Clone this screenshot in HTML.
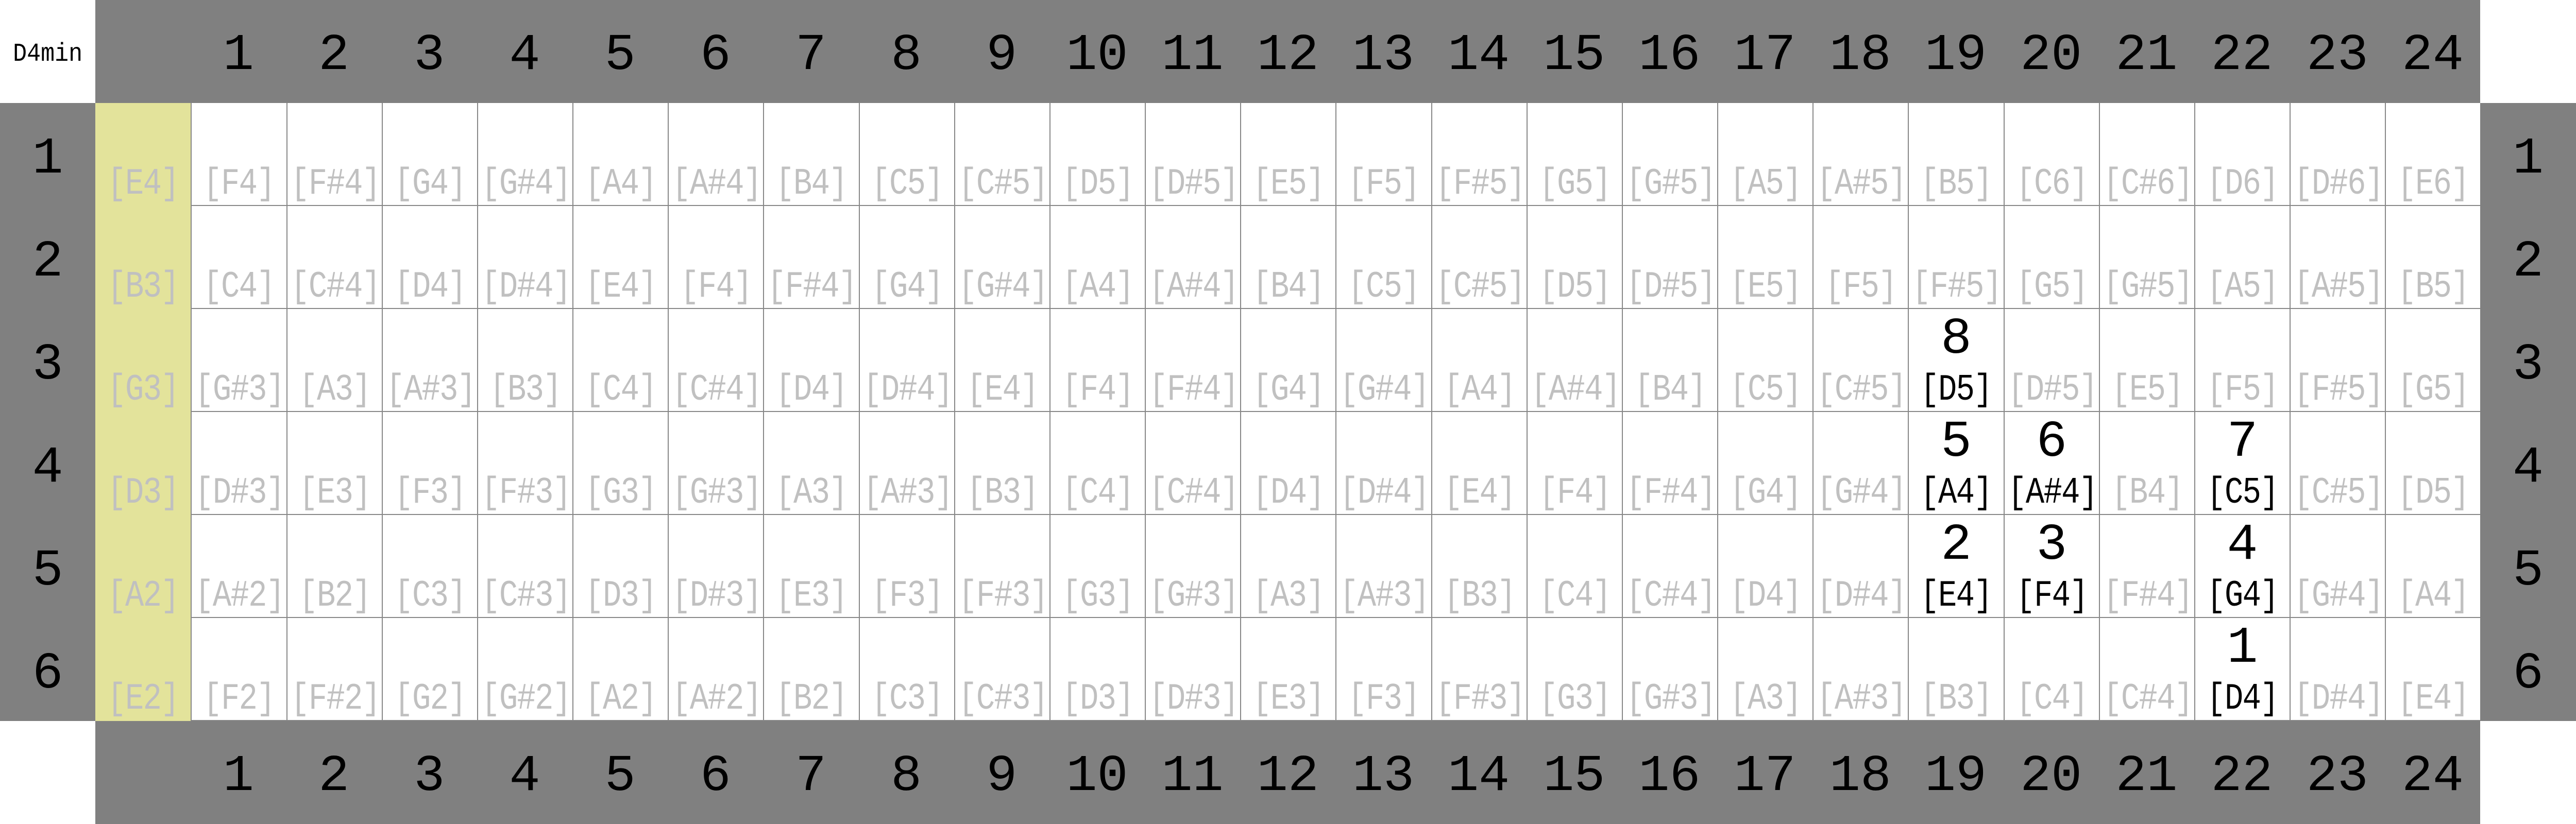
<!DOCTYPE html>
<html><head><meta charset="utf-8"><style>
html,body{margin:0;padding:0;background:#fff;width:100vw;height:100vh;overflow:hidden;}
#b{position:absolute;left:0;top:0;width:100vw;height:100vh;overflow:hidden;font-family:"Liberation Mono","DejaVu Sans Mono",monospace;}
.row{display:flex;width:100vw;height:12.5vh;}
.row>div{position:relative;box-sizing:border-box;width:calc(100vw / 27);height:12.5vh;flex:0 0 calc(100vw / 27);overflow:hidden;}
.g{background:#808080;}
.w{background:#fff;}
.y{background:#e3e39b;}
.f{background:#fff;border-left:2px solid #888;border-bottom:2px solid #888;}
.n{position:absolute;left:0;right:0;top:3.6875vh;text-align:center;font-size:6.25vh;line-height:1;color:#000;}
.g.r .n{top:3.75vh;}
.t{position:absolute;left:-10px;right:-10px;top:7.5625vh;text-align:center;font-size:4.5vh;line-height:1;color:#c0c0c0;transform:scaleX(0.84);white-space:nowrap;letter-spacing:-2px;}
.k{color:#000;}
.h{position:absolute;left:0;right:0;top:0.625vh;text-align:center;font-size:6.25vh;line-height:1;color:#000;}
.lbl{position:absolute;left:-10px;right:-10px;top:5.0625vh;text-align:center;font-size:3.125vh;line-height:1;color:#000;transform:scaleX(0.9);}
</style></head><body><div id="b">
<div class="row">
<div class="w"><span class="lbl">D4min</span></div><div class="g"></div>
<div class="g"><span class="n">1</span></div><div class="g"><span class="n">2</span></div><div class="g"><span class="n">3</span></div><div class="g"><span class="n">4</span></div><div class="g"><span class="n">5</span></div><div class="g"><span class="n">6</span></div><div class="g"><span class="n">7</span></div><div class="g"><span class="n">8</span></div><div class="g"><span class="n">9</span></div><div class="g"><span class="n">10</span></div><div class="g"><span class="n">11</span></div><div class="g"><span class="n">12</span></div><div class="g"><span class="n">13</span></div><div class="g"><span class="n">14</span></div><div class="g"><span class="n">15</span></div><div class="g"><span class="n">16</span></div><div class="g"><span class="n">17</span></div><div class="g"><span class="n">18</span></div><div class="g"><span class="n">19</span></div><div class="g"><span class="n">20</span></div><div class="g"><span class="n">21</span></div><div class="g"><span class="n">22</span></div><div class="g"><span class="n">23</span></div><div class="g"><span class="n">24</span></div>
<div class="w"></div>
</div>
<div class="row">
<div class="g r"><span class="n">1</span></div><div class="y"><span class="t">[E4]</span></div>
<div class="f"><span class="t">[F4]</span></div><div class="f"><span class="t">[F#4]</span></div><div class="f"><span class="t">[G4]</span></div><div class="f"><span class="t">[G#4]</span></div><div class="f"><span class="t">[A4]</span></div><div class="f"><span class="t">[A#4]</span></div><div class="f"><span class="t">[B4]</span></div><div class="f"><span class="t">[C5]</span></div><div class="f"><span class="t">[C#5]</span></div><div class="f"><span class="t">[D5]</span></div><div class="f"><span class="t">[D#5]</span></div><div class="f"><span class="t">[E5]</span></div><div class="f"><span class="t">[F5]</span></div><div class="f"><span class="t">[F#5]</span></div><div class="f"><span class="t">[G5]</span></div><div class="f"><span class="t">[G#5]</span></div><div class="f"><span class="t">[A5]</span></div><div class="f"><span class="t">[A#5]</span></div><div class="f"><span class="t">[B5]</span></div><div class="f"><span class="t">[C6]</span></div><div class="f"><span class="t">[C#6]</span></div><div class="f"><span class="t">[D6]</span></div><div class="f"><span class="t">[D#6]</span></div><div class="f"><span class="t">[E6]</span></div>
<div class="g r"><span class="n">1</span></div>
</div>
<div class="row">
<div class="g r"><span class="n">2</span></div><div class="y"><span class="t">[B3]</span></div>
<div class="f"><span class="t">[C4]</span></div><div class="f"><span class="t">[C#4]</span></div><div class="f"><span class="t">[D4]</span></div><div class="f"><span class="t">[D#4]</span></div><div class="f"><span class="t">[E4]</span></div><div class="f"><span class="t">[F4]</span></div><div class="f"><span class="t">[F#4]</span></div><div class="f"><span class="t">[G4]</span></div><div class="f"><span class="t">[G#4]</span></div><div class="f"><span class="t">[A4]</span></div><div class="f"><span class="t">[A#4]</span></div><div class="f"><span class="t">[B4]</span></div><div class="f"><span class="t">[C5]</span></div><div class="f"><span class="t">[C#5]</span></div><div class="f"><span class="t">[D5]</span></div><div class="f"><span class="t">[D#5]</span></div><div class="f"><span class="t">[E5]</span></div><div class="f"><span class="t">[F5]</span></div><div class="f"><span class="t">[F#5]</span></div><div class="f"><span class="t">[G5]</span></div><div class="f"><span class="t">[G#5]</span></div><div class="f"><span class="t">[A5]</span></div><div class="f"><span class="t">[A#5]</span></div><div class="f"><span class="t">[B5]</span></div>
<div class="g r"><span class="n">2</span></div>
</div>
<div class="row">
<div class="g r"><span class="n">3</span></div><div class="y"><span class="t">[G3]</span></div>
<div class="f"><span class="t">[G#3]</span></div><div class="f"><span class="t">[A3]</span></div><div class="f"><span class="t">[A#3]</span></div><div class="f"><span class="t">[B3]</span></div><div class="f"><span class="t">[C4]</span></div><div class="f"><span class="t">[C#4]</span></div><div class="f"><span class="t">[D4]</span></div><div class="f"><span class="t">[D#4]</span></div><div class="f"><span class="t">[E4]</span></div><div class="f"><span class="t">[F4]</span></div><div class="f"><span class="t">[F#4]</span></div><div class="f"><span class="t">[G4]</span></div><div class="f"><span class="t">[G#4]</span></div><div class="f"><span class="t">[A4]</span></div><div class="f"><span class="t">[A#4]</span></div><div class="f"><span class="t">[B4]</span></div><div class="f"><span class="t">[C5]</span></div><div class="f"><span class="t">[C#5]</span></div><div class="f"><span class="h">8</span><span class="t k">[D5]</span></div><div class="f"><span class="t">[D#5]</span></div><div class="f"><span class="t">[E5]</span></div><div class="f"><span class="t">[F5]</span></div><div class="f"><span class="t">[F#5]</span></div><div class="f"><span class="t">[G5]</span></div>
<div class="g r"><span class="n">3</span></div>
</div>
<div class="row">
<div class="g r"><span class="n">4</span></div><div class="y"><span class="t">[D3]</span></div>
<div class="f"><span class="t">[D#3]</span></div><div class="f"><span class="t">[E3]</span></div><div class="f"><span class="t">[F3]</span></div><div class="f"><span class="t">[F#3]</span></div><div class="f"><span class="t">[G3]</span></div><div class="f"><span class="t">[G#3]</span></div><div class="f"><span class="t">[A3]</span></div><div class="f"><span class="t">[A#3]</span></div><div class="f"><span class="t">[B3]</span></div><div class="f"><span class="t">[C4]</span></div><div class="f"><span class="t">[C#4]</span></div><div class="f"><span class="t">[D4]</span></div><div class="f"><span class="t">[D#4]</span></div><div class="f"><span class="t">[E4]</span></div><div class="f"><span class="t">[F4]</span></div><div class="f"><span class="t">[F#4]</span></div><div class="f"><span class="t">[G4]</span></div><div class="f"><span class="t">[G#4]</span></div><div class="f"><span class="h">5</span><span class="t k">[A4]</span></div><div class="f"><span class="h">6</span><span class="t k">[A#4]</span></div><div class="f"><span class="t">[B4]</span></div><div class="f"><span class="h">7</span><span class="t k">[C5]</span></div><div class="f"><span class="t">[C#5]</span></div><div class="f"><span class="t">[D5]</span></div>
<div class="g r"><span class="n">4</span></div>
</div>
<div class="row">
<div class="g r"><span class="n">5</span></div><div class="y"><span class="t">[A2]</span></div>
<div class="f"><span class="t">[A#2]</span></div><div class="f"><span class="t">[B2]</span></div><div class="f"><span class="t">[C3]</span></div><div class="f"><span class="t">[C#3]</span></div><div class="f"><span class="t">[D3]</span></div><div class="f"><span class="t">[D#3]</span></div><div class="f"><span class="t">[E3]</span></div><div class="f"><span class="t">[F3]</span></div><div class="f"><span class="t">[F#3]</span></div><div class="f"><span class="t">[G3]</span></div><div class="f"><span class="t">[G#3]</span></div><div class="f"><span class="t">[A3]</span></div><div class="f"><span class="t">[A#3]</span></div><div class="f"><span class="t">[B3]</span></div><div class="f"><span class="t">[C4]</span></div><div class="f"><span class="t">[C#4]</span></div><div class="f"><span class="t">[D4]</span></div><div class="f"><span class="t">[D#4]</span></div><div class="f"><span class="h">2</span><span class="t k">[E4]</span></div><div class="f"><span class="h">3</span><span class="t k">[F4]</span></div><div class="f"><span class="t">[F#4]</span></div><div class="f"><span class="h">4</span><span class="t k">[G4]</span></div><div class="f"><span class="t">[G#4]</span></div><div class="f"><span class="t">[A4]</span></div>
<div class="g r"><span class="n">5</span></div>
</div>
<div class="row">
<div class="g r"><span class="n">6</span></div><div class="y"><span class="t">[E2]</span></div>
<div class="f"><span class="t">[F2]</span></div><div class="f"><span class="t">[F#2]</span></div><div class="f"><span class="t">[G2]</span></div><div class="f"><span class="t">[G#2]</span></div><div class="f"><span class="t">[A2]</span></div><div class="f"><span class="t">[A#2]</span></div><div class="f"><span class="t">[B2]</span></div><div class="f"><span class="t">[C3]</span></div><div class="f"><span class="t">[C#3]</span></div><div class="f"><span class="t">[D3]</span></div><div class="f"><span class="t">[D#3]</span></div><div class="f"><span class="t">[E3]</span></div><div class="f"><span class="t">[F3]</span></div><div class="f"><span class="t">[F#3]</span></div><div class="f"><span class="t">[G3]</span></div><div class="f"><span class="t">[G#3]</span></div><div class="f"><span class="t">[A3]</span></div><div class="f"><span class="t">[A#3]</span></div><div class="f"><span class="t">[B3]</span></div><div class="f"><span class="t">[C4]</span></div><div class="f"><span class="t">[C#4]</span></div><div class="f"><span class="h">1</span><span class="t k">[D4]</span></div><div class="f"><span class="t">[D#4]</span></div><div class="f"><span class="t">[E4]</span></div>
<div class="g r"><span class="n">6</span></div>
</div>
<div class="row">
<div class="w"></div><div class="g"></div>
<div class="g"><span class="n">1</span></div><div class="g"><span class="n">2</span></div><div class="g"><span class="n">3</span></div><div class="g"><span class="n">4</span></div><div class="g"><span class="n">5</span></div><div class="g"><span class="n">6</span></div><div class="g"><span class="n">7</span></div><div class="g"><span class="n">8</span></div><div class="g"><span class="n">9</span></div><div class="g"><span class="n">10</span></div><div class="g"><span class="n">11</span></div><div class="g"><span class="n">12</span></div><div class="g"><span class="n">13</span></div><div class="g"><span class="n">14</span></div><div class="g"><span class="n">15</span></div><div class="g"><span class="n">16</span></div><div class="g"><span class="n">17</span></div><div class="g"><span class="n">18</span></div><div class="g"><span class="n">19</span></div><div class="g"><span class="n">20</span></div><div class="g"><span class="n">21</span></div><div class="g"><span class="n">22</span></div><div class="g"><span class="n">23</span></div><div class="g"><span class="n">24</span></div>
<div class="w"></div>
</div>
</div></body></html>
